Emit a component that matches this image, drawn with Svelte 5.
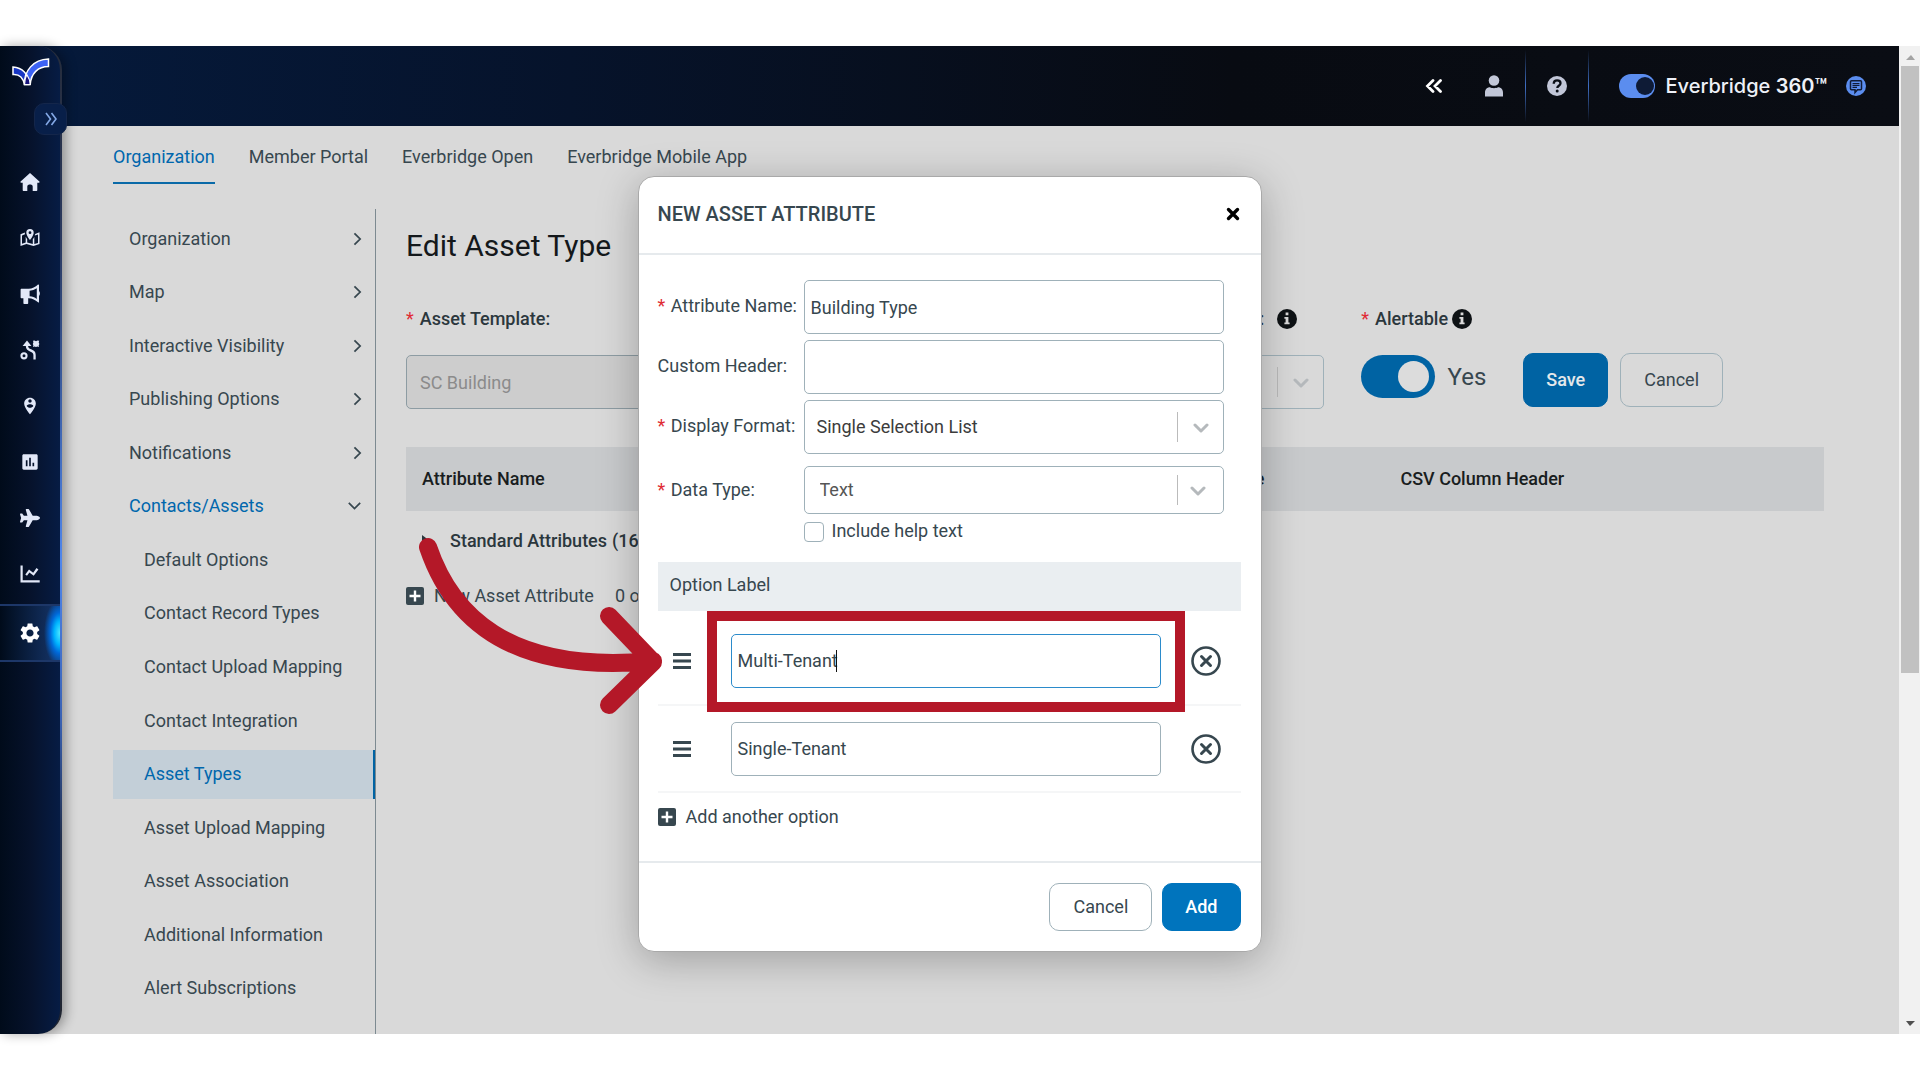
<script>
  const tabs = ["Organization", "Member Portal", "Everbridge Open", "Everbridge Mobile App"];

  const sections = [
    { label: "Organization" },
    { label: "Map" },
    { label: "Interactive Visibility" },
    { label: "Publishing Options" },
    { label: "Notifications" },
    {
      label: "Contacts/Assets",
      open: true,
      children: [
        "Default Options",
        "Contact Record Types",
        "Contact Upload Mapping",
        "Contact Integration",
        "Asset Types",
        "Asset Upload Mapping",
        "Asset Association",
        "Additional Information",
        "Alert Subscriptions",
      ],
    },
  ];
  const current = "Asset Types";

  const rail = [
    {
      name: "Home",
      box: "0 0 20 20",
      d: "M10 1 .6 9.6c-.5.5-.2 1.2.5 1.2h1.6V18c0 .6.4 1 1 1h3.6v-4.6c0-2.600 5.400-2.600 5.400 0V19h3.600c.6 0 1-.4 1-1v-7.200h1.600c.7 0 1-.7.5-1.200z",
    },
    {
      name: "Universe",
      box: "0 0 20 20",
      d: "M10 1a3.700 3.700 0 0 0-3.700 3.700C6.300 7.400 10 12 10 12s3.700-4.600 3.700-7.300A3.700 3.700 0 0 0 10 1zm0 2.300a1.400 1.400 0 1 1 0 2.800 1.400 1.400 0 0 1 0-2.800zM4.900 4.600.5 6.300V18l6-2 7 2 6-2V4.300l-4.300 1.600c-.1.600-.3 1.100-.5 1.700L18 6.500v8.400l-3.700 1.200V8.900c-.5.900-1 1.700-1.500 2.400V16l-5.600-1.600v-3.200C6.700 10.500 6.200 9.700 5.700 8.800v5.800L2 15.800V7.400l3-1.100c-.1-.6-.2-1.100-.1-1.700z",
    },
    {
      name: "Communications",
      box: "0 0 20 20",
      d: "M18 .6c.6-.4 1 0 1 .5v6.200c1.200.5 1.200 3.900 0 4.400v6.200c0 .6-.5.900-1 .4-2.600-2.500-5.800-3.900-9.300-4.100H8.200V19c0 .6-.4 1-1 1H4.400c-.6 0-1-.4-1-1v-4.800H1.600c-.6 0-1-.4-1-1V5.800c0-.6.4-1 1-1h7.100C12.200 4.800 15.400 3.200 18 .6zM16.800 4.200A15 15 0 0 1 9.600 6.800v5.500c2.700.2 5.100 1.100 7.200 2.600z",
    },
    {
      name: "Orchestration",
      box: "0 0 20 20",
      d: "M4 12.200a3.600 3.600 0 1 0 0 7.200 3.600 3.600 0 0 0 0-7.200zm0 2.100a1.500 1.500 0 1 1 0 3 1.500 1.500 0 0 1 0-3zM7 .5 2.600 6h3.200c.1 3 1.700 4.500 4.200 5.400 2.500.9 3.400 1.700 3.400 3.800v4.400h2.300v-4.700c0-3-1.700-4.500-4.500-5.600C9 8.500 8.200 7.700 8.100 6h3.300zM13 .8l1.500-.3 1.500.8 1.500-.8 1.700.3-.5 1.700.7 1.500-.7 1.400.3 1.500-1.700-.3-1.300.5-1.500-.5-1.500.3.4-1.600-.6-1.300.6-1.500z",
    },
    {
      name: "Contacts",
      box: "0 0 24 24",
      d: "M12 2C8.140 2 5 5.140 5 9c0 5.250 7 13 7 13s7-7.750 7-13c0-3.860-3.140-7-7-7zm0 2c1.100 0 2 .9 2 2 0 1.110-.9 2-2 2s-2-.89-2-2c0-1.100.9-2 2-2zm0 10c-1.670 0-3.140-.85-4-2.150.02-1.320 2.670-2.050 4-2.050s3.980.73 4 2.050c-.86 1.300-2.330 2.150-4 2.150z",
    },
    {
      name: "Reports",
      box: "0 0 24 24",
      d: "M19.500 2.800h-15c-1 0-1.700.7-1.700 1.700v15c0 1 .7 1.700 1.700 1.700h15c1 0 1.700-.7 1.700-1.700v-15c0-1-.7-1.700-1.700-1.700zM9 17H7v-7h2v7zm4 0h-2V7h2v10zm4 0h-2v-4h2v4z",
    },
    {
      name: "Travel",
      box: "0 0 576 512",
      d: "M480 192H365.710L260.610 8.060A16.014 16.014 0 0 0 246.710 0h-65.500c-10.630 0-18.300 10.170-15.380 20.390L214.860 192H112l-43.200-57.600c-3.020-4.030-7.770-6.400-12.800-6.400H16.010C5.600 128-2.040 137.780.49 147.880L32 256 .49 364.120C-2.040 374.220 5.600 384 16.010 384H56c5.040 0 9.780-2.370 12.800-6.400L112 320h102.860l-49.030 171.600c-2.920 10.220 4.750 20.400 15.380 20.400h65.500c5.740 0 11.040-3.080 13.890-8.060L365.710 320H480c35.350 0 96-28.650 96-64s-60.650-64-96-64z",
    },
    {
      name: "Analytics",
      box: "0 0 20 20",
      d: "M.5 1.500h2.200v14.800h17v2.300H.5zM5.300 10.500 9 5.500l4.200 3.300L16.500 4l1.900 1.400-4.700 6.400-4.300-3.300-2.400 3.300z",
    },
    {
      name: "Settings",
      box: "2 2 20 20",
      d: "M19.140 12.940c.04-.3.06-.61.06-.94 0-.32-.02-.64-.07-.94l2.030-1.580c.18-.14.23-.41.12-.61l-1.920-3.320c-.12-.22-.37-.29-.59-.22l-2.390.96c-.5-.38-1.030-.7-1.620-.94l-.36-2.540c-.04-.24-.24-.41-.48-.41h-3.840c-.24 0-.43.17-.47.41l-.36 2.540c-.59.24-1.130.57-1.620.94l-2.390-.96c-.22-.08-.47 0-.59.22L2.740 8.870c-.12.21-.08.47.12.61l2.030 1.580c-.05.3-.09.63-.09.94s.02.64.07.94l-2.030 1.580c-.18.14-.23.41-.12.61l1.920 3.320c.12.22.37.29.59.22l2.390-.96c.5.38 1.030.7 1.620.94l.36 2.540c.05.24.24.41.48.41h3.840c.24 0 .44-.17.47-.41l.36-2.540c.59-.24 1.130-.56 1.620-.94l2.390.96c.22.08.47 0 .59-.22l1.920-3.320c.12-.22.07-.47-.12-.61l-2.010-1.580zM12 15.600c-1.980 0-3.600-1.620-3.600-3.600s1.620-3.600 3.600-3.600 3.600 1.620 3.600 3.600-1.620 3.600-3.600 3.600z",
    },
  ];

  let attributeName = $state("Building Type");
  let customHeader = $state("");
  let helpText = $state(false);
  let alertable = $state(true);
  let suite = $state(true);
  let options = $state([
    { id: 1, value: "Multi-Tenant", editing: true },
    { id: 2, value: "Single-Tenant", editing: false },
  ]);

  const addOption = () => {
    options.push({ id: Date.now(), value: "", editing: false });
  };

  const removeOption = (id) => {
    options = options.filter((o) => o.id !== id);
  };
</script>

{#snippet chevron(down)}
  <svg class="chevron" class:down viewBox="0 0 10 16" width="9" height="14" aria-hidden="true">
    <path d="M1.500 1.500 8 8l-6.500 6.500" fill="none" stroke="currentColor" stroke-width="2" />
  </svg>
{/snippet}

{#snippet caretDown()}
  <svg class="caret-down" viewBox="0 0 16 10" width="16" height="10" aria-hidden="true">
    <path d="M2 2l6 6 6-6" fill="none" stroke="currentColor" stroke-width="3" stroke-linecap="round" stroke-linejoin="round" />
  </svg>
{/snippet}

{#snippet info()}
  <svg viewBox="0 0 20 20" width="20" height="20" aria-hidden="true">
    <circle cx="10" cy="10" r="10" fill="#0e1215" />
    <path d="M8.600 3.600h2.800v2.600H8.600zM7.400 8h4v5.600h1.200v1.700H7.400v-1.700h1.200V9.700H7.400z" fill="#d9d9d9" />
  </svg>
{/snippet}

{#snippet plus()}
  <svg viewBox="0 0 18 18" width="18" height="18" aria-hidden="true">
    <rect width="18" height="18" rx="2" fill="currentColor" />
    <path d="M9 3.500v11M3.500 9h11" stroke="#fff" stroke-width="2.400" />
  </svg>
{/snippet}

<div class="page">
  <div class="app">
    <header>
      <button class="plain collapse-top" aria-label="Collapse toolbar">
        <svg viewBox="0 0 18 14" width="18" height="14">
          <path d="M8 1.500 2.500 7 8 12.500M15.500 1.500 10 7l5.500 5.500" fill="none" stroke="#fff" stroke-width="2.800" stroke-linecap="round" />
        </svg>
      </button>
      <button class="plain user" aria-label="Account">
        <svg viewBox="0 0 18 22" width="18" height="22">
          <circle cx="9" cy="5.500" r="5.300" fill="#c2c7d8" />
          <path d="M0 21.500v-3.800C0 14.500 2 12.300 5 12.300c2 1.200 6 1.200 8 0 3 0 5 2.200 5 5.400v3.800z" fill="#c2c7d8" />
        </svg>
      </button>
      <span class="rule"></span>
      <button class="plain help" aria-label="Help">
        <svg viewBox="0 0 20 20" width="20" height="20">
          <circle cx="10" cy="10" r="10" fill="#c2c7d8" />
          <path d="M6.700 7.700C6.800 5.500 8.200 4.400 10.100 4.400c2 0 3.400 1.200 3.400 2.900 0 2.400-3.200 2.400-3.200 4.600" fill="none" stroke="#090d15" stroke-width="2.300" />
          <circle cx="10.200" cy="14.900" r="1.500" fill="#090d15" />
        </svg>
      </button>
      <span class="rule"></span>
      <label class="suite">
        <input type="checkbox" role="switch" bind:checked={suite} />
        <span>Everbridge <b>360™</b></span>
      </label>
      <button class="plain chat" aria-label="Feedback">
        <svg viewBox="0 0 20 20" width="20" height="20">
          <circle cx="10" cy="10" r="10" fill="#5b8def" />
          <path d="M5.500 4.800h9c.7 0 1 .4 1 1v7c0 .6-.4 1-1 1h-3L9 16.500v-2.700H5.500c-.6 0-1-.4-1-1v-7c0-.6.4-1 1-1z" fill="#5b8def" stroke="#101c38" stroke-width="1.500" />
          <path d="M6.500 7.500h7M6.500 9.400h7M6.500 11.300h4.500" stroke="#101c38" stroke-width="1.200" />
        </svg>
      </button>
    </header>

    <aside>
      <a class="logo" href="#home" aria-label="Everbridge">
        <svg viewBox="0 0 38 28" width="38" height="28">
          <path d="M1 9v7.500C6.500 16 11 19.500 12.500 26.500h4.500C17 16 10 9.500 1 9z" fill="#1836c4" stroke="#fff" stroke-width="1.500" />
          <path d="M36.500 1v7.500C26 8.500 19 15.500 18.200 26.500h-5.700C12 13 21 1.500 36.500 1z" fill="#3c62f5" stroke="#fff" stroke-width="1.500" />
          <path d="M14.800 16.500c1.600 2.400 3.400 6 3.400 10h-5.700c0-4 .8-7 2.300-10z" fill="#16127c" stroke="#fff" stroke-width="1.200" />
        </svg>
      </a>
      <button class="expand" aria-label="Expand menu">
        <svg viewBox="0 0 12 14" width="12" height="14">
          <path d="M1 1l4.500 6L1 13M6.500 1 11 7l-4.500 6" fill="none" stroke="#83a8e6" stroke-width="1.600" />
        </svg>
      </button>
      <nav class="rail" aria-label="Main">
        {#each rail as item}
          <a href="#{item.name}" class:active={item.name === "Settings"} aria-label={item.name}>
            <svg viewBox={item.box} width="20" height="20"><path d={item.d} fill-rule="evenodd" /></svg>
          </a>
        {/each}
      </nav>
    </aside>

    <div class="content">
      <nav class="tabs" aria-label="Settings">
        {#each tabs as tab, i}
          <a href="#tab{i}" class:active={i === 0}>{tab}</a>
        {/each}
      </nav>

      <div class="columns">
        <nav class="sections" aria-label="Sections">
          {#each sections as section}
            <a href="#section" class:open={section.open}>
              {section.label}
              {@render chevron(section.open)}
            </a>
            {#each section.children ?? [] as child}
              <a href="#child" class="child" class:current={child === current}>{child}</a>
            {/each}
          {/each}
        </nav>

        <main>
          <h1>Edit Asset Type</h1>

          <div class="form">
            <div class="field">
              <label for="template"><i>*</i> Asset Template:</label>
              <input id="template" class="control" value="SC Building" disabled />
            </div>
            <div class="field">
              <label class="right" for="kind"><span>:</span>{@render info()}</label>
              <div class="select">
                <select id="kind" class="control"><option></option></select>
                <span class="split"></span>
                {@render caretDown()}
              </div>
            </div>
            <div class="field alertable">
              <label for="alertable"><i>*</i> Alertable {@render info()}</label>
              <div class="switch">
                <input id="alertable" type="checkbox" role="switch" bind:checked={alertable} />
                <span>{alertable ? "Yes" : "No"}</span>
              </div>
            </div>
            <div class="actions">
              <button class="button primary">Save</button>
              <button class="button">Cancel</button>
            </div>
          </div>

          <table>
            <thead>
              <tr>
                <th class="name">Attribute Name</th>
                <th class="type">e</th>
                <th>CSV Column Header</th>
              </tr>
            </thead>
            <tbody>
              <tr>
                <td colspan="3">
                  <button class="plain group">
                    <svg viewBox="0 0 8 12" width="8" height="12"><path d="M0 0l8 6-8 6z" fill="currentColor" /></svg>
                    <span>Standard Attributes</span>
                    <span>(16)</span>
                  </button>
                </td>
              </tr>
            </tbody>
          </table>
          <div class="new-row">
            <button class="plain add">{@render plus()} New Asset Attribute</button>
            <span>0 of</span>
          </div>
        </main>
      </div>
    </div>

    <div class="overlay">
      <div class="modal" role="dialog" aria-modal="true" aria-labelledby="modal-title">
        <div class="modal-head">
          <h2 id="modal-title">NEW ASSET ATTRIBUTE</h2>
          <button class="plain" aria-label="Close">
            <svg viewBox="0 0 14 14" width="14" height="14">
              <path d="M2.500 2.500l9 9M11.500 2.500l-9 9" stroke="#000" stroke-width="3.400" stroke-linecap="round" />
            </svg>
          </button>
        </div>

        <div class="modal-body">
          <div class="rows">
            <label for="attr"><i>*</i> Attribute Name:</label>
            <input id="attr" class="control" bind:value={attributeName} />

            <label for="header">Custom Header:</label>
            <input id="header" class="control" bind:value={customHeader} />

            <label for="format"><i>*</i> Display Format:</label>
            <div class="select">
              <select id="format" class="control"><option>Single Selection List</option></select>
              <span class="split"></span>
              {@render caretDown()}
            </div>

            <label class="gap" for="data"><i>*</i> Data Type:</label>
            <div class="select small gap">
              <select id="data" class="control"><option>Text</option></select>
              <span class="split"></span>
              {@render caretDown()}
            </div>

            <label class="help-text">
              <input type="checkbox" bind:checked={helpText} />
              Include help text
            </label>
          </div>

          <div class="option-head">Option Label</div>
          <ul class="options">
            {#each options as option (option.id)}
              <li class:editing={option.editing}>
                <svg class="drag" viewBox="0 0 18 18" width="18" height="18" aria-hidden="true">
                  <path d="M0 2.500h18M0 9h18M0 15.500h18" stroke="currentColor" stroke-width="3" />
                </svg>
                <div class="option-field">
                  <input class="control" aria-label="Option label" bind:value={option.value} />
                  {#if option.editing}<span class="cursor"></span>{/if}
                </div>
                <button class="plain remove" aria-label="Remove option" onclick={() => removeOption(option.id)}>
                  <svg viewBox="0 0 30 30" width="30" height="30">
                    <circle cx="15" cy="15" r="13.500" fill="none" stroke="currentColor" stroke-width="2.600" />
                    <path d="M10.500 10.500l9 9M19.500 10.500l-9 9" stroke="currentColor" stroke-width="3" stroke-linecap="round" />
                  </svg>
                </button>
              </li>
            {/each}
          </ul>
          <button class="plain add" onclick={addOption}>{@render plus()} Add another option</button>
        </div>

        <div class="modal-foot">
          <button class="button">Cancel</button>
          <button class="button primary">Add</button>
        </div>

        <svg class="pointer" viewBox="0 0 252 186" width="252" height="186" aria-hidden="true">
          <path
            d="M13 12C35 77 90 140 238 126M194 81l44 46-44 43"
            fill="none"
            stroke="#b41828"
            stroke-width="18"
            stroke-linecap="round"
            stroke-linejoin="round"
          />
        </svg>
      </div>
    </div>
  </div>

  <div class="scrollbar" aria-hidden="true">
    <svg viewBox="0 0 20 20" width="20" height="20"><path d="M5 14l5-5 4 5z" fill="#a3a3a3" /></svg>
    <div class="track"><div class="thumb"></div></div>
    <svg viewBox="0 0 20 20" width="20" height="20"><path d="M5 7h9l-5 5z" fill="#505050" /></svg>
  </div>
</div>

<style>
  :global(body) {
    background: #fff;
  }
  .page {
    box-sizing: border-box;
    min-height: 100vh;
    padding: 46px 0;
    display: grid;
    grid-template-columns: 1fr 21px;
    font-family: Roboto, "Liberation Sans", sans-serif;
    font-size: 18px;
    line-height: 24px;
    color: #37474f;
  }
  .page * {
    box-sizing: border-box;
  }
  a {
    color: inherit;
    text-decoration: none;
  }
  button,
  input,
  select {
    font: inherit;
    color: inherit;
    margin: 0;
  }
  svg {
    display: block;
    flex: none;
  }
  i {
    color: #e02b35;
    font-style: normal;
    font-weight: 400;
    margin-right: 2px;
  }
  .plain {
    border: 0;
    padding: 0;
    background: none;
    display: flex;
    align-items: center;
  }

  .app {
    position: relative;
    display: grid;
    grid-template-columns: 62px 1fr;
    grid-template-rows: 80px 1fr;
    background: #d9d9d9;
  }

  header {
    grid-area: 1 / 1 / 2 / 3;
    display: flex;
    align-items: center;
    justify-content: flex-end;
    padding-right: 33px;
    background: linear-gradient(90deg, #051a3c 0%, #06132b 30%, #080b12 65%, #0a0d14 100%);
  }
  .user {
    margin: 0 22px 0 42px;
  }
  .help {
    margin: 0 21px;
  }
  .rule {
    width: 1px;
    height: 72px;
    background: linear-gradient(#3f6fc400, #3f6fc4, #3f6fc400);
  }
  .suite {
    display: flex;
    align-items: center;
    gap: 10px;
    margin: 0 19px 0 30px;
    color: #eef1f8;
    font-family: Inter, Roboto, sans-serif;
    font-size: 20px;
    font-weight: 500;
  }
  .suite b {
    font-weight: 600;
  }
  .suite input {
    appearance: none;
    width: 36px;
    height: 24px;
    padding: 3px;
    border-radius: 12px;
    background: #5b8def;
  }
  .suite input::before {
    content: "";
    display: block;
    width: 18px;
    height: 18px;
    border-radius: 50%;
    background: #0e1b36;
  }
  .suite input:checked::before {
    margin-left: auto;
    margin-right: -2px;
  }

  aside {
    grid-area: 1 / 1 / 3 / 2;
    position: relative;
    z-index: 1;
    padding-top: 12px;
    border-radius: 0 24px 24px 0;
    background:
      linear-gradient(90deg, #000b1a, #06122b 50%, #061c44) padding-box,
      linear-gradient(#262c3a 0%, #2b3a60 20%, #4f86ec 52%, #3a62b4 68%, #22304e 80%, #20242e 100%) border-box;
    border-right: 2px solid transparent;
    box-shadow: 4px 0 12px #0005;
  }
  .logo {
    display: block;
    padding-left: 12px;
  }
  .expand {
    display: flex;
    align-items: center;
    justify-content: center;
    width: 33px;
    height: 32px;
    margin: 17px 0 19px 34px;
    padding: 0;
    border: 1px solid #14264a;
    border-radius: 10px;
    background: #081f49;
  }
  .rail a {
    display: flex;
    align-items: center;
    justify-content: center;
    height: 56px;
    fill: #e2e8f8;
  }
  .rail .active {
    height: 58px;
    margin-top: 2px;
    fill: #fff;
    border-top: 2px solid #1d3768;
    border-bottom: 2px solid #1d3768;
    background:
      radial-gradient(ellipse 16px 34px at 100% 50%, #4fe8ff, #00b4ff 35%, #0068d8 60%, #0a4fc000 100%),
      linear-gradient(90deg, #000b1a, #16366c);
  }

  .content {
    display: flex;
    flex-direction: column;
    padding-left: 51px;
  }
  .tabs {
    display: flex;
    gap: 34px;
    margin-bottom: 25px;
  }
  .tabs a {
    padding: 19px 0 13px;
    border-bottom: 2px solid transparent;
  }
  .tabs .active {
    color: #0067ad;
    border-color: #0a6aa8;
  }
  .columns {
    flex: 1;
    display: grid;
    grid-template-columns: 263px 1fr;
  }
  .sections {
    display: flex;
    flex-direction: column;
    justify-content: space-between;
    padding: 5px 0 21px;
    border-right: 1px solid #7d8a91;
  }
  .sections a {
    display: flex;
    align-items: center;
    justify-content: space-between;
    height: 49px;
    padding: 0 13px 0 16px;
  }
  .sections .open,
  .sections .current {
    color: #0067ad;
  }
  .sections .child {
    padding-left: 31px;
  }
  .sections .current {
    background: #c3cfd8;
    border-right: 2px solid #0063a3;
  }
  .chevron {
    color: #37474f;
  }
  .chevron.down {
    margin-right: 3px;
    transform: rotate(90deg);
  }

  main {
    padding: 19px 75px 0 30px;
  }
  h1 {
    margin: 0 0 43px;
    color: #14181b;
    font-size: 30px;
    font-weight: 400;
    line-height: 36px;
  }
  .form {
    display: flex;
    margin-bottom: 38px;
  }
  .field {
    flex: 1;
    margin-right: 37px;
  }
  .field > label {
    display: flex;
    align-items: center;
    gap: 4px;
    margin-bottom: 24px;
    font-weight: 500;
    color: #2b373d;
  }
  .field > .right {
    justify-content: flex-end;
    gap: 13px;
    padding-right: 27px;
  }
  .control {
    display: block;
    width: 100%;
    height: 54px;
    padding: 0 6px;
    border: 1px solid #9fb1b9;
    border-radius: 5px;
    background: none;
    outline: 0;
  }
  .control:disabled {
    padding: 0 13px;
    background: #cdcdcd;
    border-color: #8d9ca3;
    color: #8b8b8b;
  }
  .select {
    position: relative;
  }
  .select .control {
    appearance: none;
    padding: 0 12px;
    color: #3c3c3c;
  }
  .select .split {
    position: absolute;
    right: 46px;
    top: 12px;
    bottom: 12px;
    width: 1px;
    background: #bbb;
  }
  .caret-down {
    position: absolute;
    right: 15px;
    top: 50%;
    margin-top: -4px;
    color: #b5b9bc;
    pointer-events: none;
  }
  .field.alertable {
    flex: none;
    width: 125px;
  }
  .switch {
    display: flex;
    align-items: center;
    gap: 13px;
    font-size: 24px;
  }
  .switch input {
    appearance: none;
    width: 75px;
    height: 43px;
    padding: 6px;
    border-radius: 22px;
    background: #0063a3;
  }
  .switch input::before {
    content: "";
    display: block;
    width: 31px;
    height: 31px;
    border-radius: 50%;
    background: #dcdcdc;
  }
  .switch input:checked::before {
    margin-left: auto;
  }
  .actions {
    display: flex;
    align-items: flex-start;
    gap: 12px;
    padding-top: 46px;
    margin-right: 101px;
  }
  .button {
    height: 54px;
    padding: 0 23px;
    border: 1px solid #9fb1b9;
    border-radius: 10px;
    background: none;
  }
  .button.primary {
    padding: 0 22px;
    border-color: #0074bd;
    background: #0074bd;
    color: #fff;
    font-weight: 500;
  }
  .actions .primary {
    border-color: #0063a3;
    background: #0063a3;
    color: #e4e8ea;
  }

  table {
    width: 100%;
    border-collapse: collapse;
    color: #2b373d;
  }
  th {
    height: 64px;
    padding: 0 16px;
    background: #c8cacc;
    color: #191d20;
    font-weight: 500;
    text-align: left;
  }
  .name {
    width: 30%;
  }
  .type {
    width: 39%;
    padding-right: 120px;
    text-align: right;
  }
  td {
    height: 60px;
    padding: 0 16px;
  }
  .group {
    gap: 5px;
    font-weight: 500;
  }
  .group svg {
    margin-right: 15px;
  }
  .new-row {
    display: flex;
    align-items: center;
    gap: 21px;
    height: 50px;
  }
  .add {
    gap: 10px;
  }

  .overlay {
    position: absolute;
    inset: 0;
    z-index: 2;
    display: flex;
    justify-content: center;
    align-items: flex-start;
    padding-top: 130px;
    pointer-events: none;
  }
  .modal {
    position: relative;
    width: 624px;
    border: 1px solid #a9a9a9;
    border-radius: 16px;
    background: #fff;
    box-shadow: 0 8px 40px #0004;
    pointer-events: auto;
  }
  .modal-head {
    display: flex;
    align-items: center;
    justify-content: space-between;
    height: 78px;
    padding: 0 21px 3px 19px;
    border-bottom: 2px solid #e6eaed;
  }
  h2 {
    margin: 0;
    font-size: 20px;
    font-weight: 500;
    line-height: 24px;
  }
  .modal-body {
    padding: 25px 20px 32px 19px;
  }
  .rows {
    display: grid;
    grid-template-columns: 146px 1fr;
    row-gap: 6px;
    align-items: center;
    padding-right: 17px;
  }
  .rows > label {
    padding-bottom: 3px;
    white-space: nowrap;
  }
  .rows .gap {
    margin-top: 6px;
    padding-bottom: 0;
  }
  .rows i {
    margin-right: 1px;
  }
  .small .control {
    height: 48px;
    padding: 0 15px;
    color: #555;
  }
  .small .split {
    top: 9px;
    bottom: 9px;
  }
  .small .caret-down {
    right: 18px;
  }
  .rows .help-text {
    grid-column: 2;
    display: flex;
    align-items: center;
    gap: 8px;
    margin-top: -1px;
    padding-bottom: 0;
  }
  .help-text input {
    appearance: none;
    width: 20px;
    height: 20px;
    margin-top: 2px;
    border: 1px solid #9fb1b9;
    border-radius: 4px;
  }
  .option-head {
    height: 49px;
    margin-top: 19px;
    padding: 11px 12px;
    background: #eaeef1;
  }
  .options {
    margin: 0;
    padding: 0;
    list-style: none;
  }
  .options li {
    position: relative;
    display: flex;
    align-items: center;
    height: 87px;
    padding: 0 20px 0 15px;
    border-bottom: 2px solid #f5f6f7;
  }
  .options li.editing {
    height: 95px;
    padding-top: 6px;
  }
  .editing::after {
    content: "";
    position: absolute;
    left: 49px;
    right: 56px;
    top: 0;
    bottom: -8px;
    border: 10px solid #b41828;
    pointer-events: none;
  }
  .option-field {
    position: relative;
    flex: 1;
    margin: 0 30px 0 40px;
  }
  .editing .control {
    border-color: #2b8bcb;
  }
  .cursor {
    position: absolute;
    left: 105px;
    top: 16px;
    width: 1px;
    height: 22px;
    background: #111;
  }
  .modal-body > .add {
    margin-top: 12px;
  }
  .modal-foot {
    display: flex;
    justify-content: flex-end;
    gap: 10px;
    padding: 20px 20px 20px 19px;
    border-top: 2px solid #e6eaed;
  }
  .modal-foot .button {
    height: 48px;
  }
  .pointer {
    position: absolute;
    left: -224px;
    top: 358px;
    pointer-events: none;
  }

  .scrollbar {
    display: flex;
    flex-direction: column;
    padding: 0 1px 0 2px;
    background: #f1f1f1;
  }
  .track {
    flex: 1;
  }
  .thumb {
    height: 64%;
    background: #c1c1c1;
  }
</style>
